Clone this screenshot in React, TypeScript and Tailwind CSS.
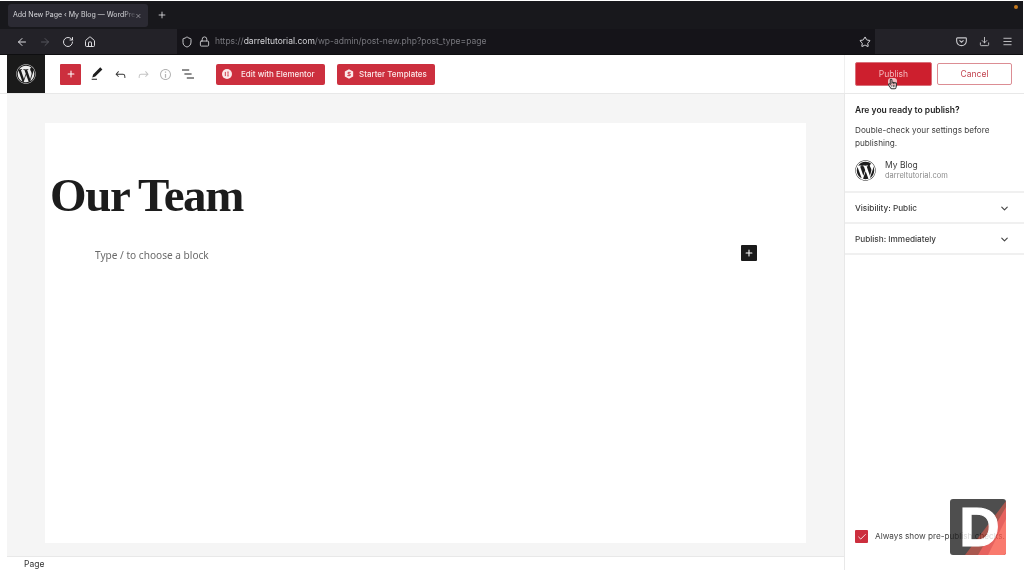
import { ArrowLeft, ArrowRight, RotateCw, House, Shield, Lock, Star, Download, Menu, X, Plus, ChevronDown, Check } from "lucide-react";
import { FaWordpress, FaRegHandPointer } from "react-icons/fa";

const ui = "font-['Inter','Liberation_Sans',sans-serif]";

function GbIcon({ d, className }: { d: string; className: string }) {
  return (
    <svg viewBox="0 0 24 24" className={className} fill="currentColor">
      <path d={d} />
    </svg>
  );
}

function BrowserChrome() {
  return (
    <div className={`${ui} shrink-0 pt-px pr-px bg-white`}>
      {/* tabs */}
      <div className="h-[28px] bg-[#18181c] flex items-center pl-[8px]">
        <div className="relative w-[140px] h-[23px] mt-px rounded-[3px] bg-[#2b2a33] flex items-center pl-[5px] pr-[6px] text-[7px] text-[#d8d8dc] whitespace-nowrap">
          <span>Add New Page ‹ My Blog — WordPre</span>
          <span className="absolute right-[12px] top-0 h-full w-[12px] bg-gradient-to-r from-transparent to-[#2b2a33]" />
          <X className="w-[8px] h-[8px] ml-auto text-[#c8c8cc]" />
        </div>
        <Plus className="w-[10px] h-[10px] ml-[9px] text-[#e2e2e6]" />
        <div className="ml-auto mr-[5px] mb-[17px] w-[4px] h-[4px] rounded-full bg-[#c67a1e]" />
      </div>
      {/* nav bar */}
      <div className="h-[26px] bg-[#232228] flex items-center pl-[16px] border-b border-[#0e0e10]">
        <ArrowLeft className="w-[12px] h-[12px] text-[#dcdce0]" />
        <ArrowRight className="w-[12px] h-[12px] ml-[11px] text-[#55555c]" />
        <RotateCw className="w-[12px] h-[12px] ml-[11px] text-[#dcdce0]" />
        <House className="w-[12px] h-[12px] ml-[10px] text-[#dcdce0]" />
        <div className="w-[698px] h-[25px] ml-[81px] bg-[#151419] flex items-center pl-[4px] text-[8.5px] text-[#77777d] whitespace-nowrap">
          <Shield className="w-[12px] h-[12px] text-[#c8c8cc]" />
          <Lock className="w-[11px] h-[11px] ml-[6px] text-[#c8c8cc]" />
          <span className="ml-[5px]">
            https://<span className="text-[#d4d4d8]">darreltutorial.com</span>/wp-admin/post-new.php?post_type=page
          </span>
          <Star className="w-[12px] h-[12px] ml-auto mr-[4px] text-[#e0e0e4]" />
        </div>
        <svg viewBox="0 0 12 12" className="w-[11px] h-[11px] ml-[81px] text-[#c8c8cc]" fill="none" stroke="currentColor" strokeWidth="1.2">
          <path d="M1.5 2h9a.8.8 0 0 1 .8.8V5.5a5.3 5 0 0 1-10.6 0V2.8a.8.8 0 0 1 .8-.8z" />
          <path d="M3.8 4.8L6 6.8l2.2-2" />
        </svg>
        <Download className="w-[11px] h-[11px] ml-[12px] text-[#c8c8cc]" />
        <Menu className="w-[11px] h-[11px] ml-[12px] text-[#c8c8cc]" />
      </div>
    </div>
  );
}

function Toolbar() {
  return (
    <div className="flex-1 flex items-center h-full">
      <div className="w-[38px] h-[38px] bg-[#1a1a1a] flex items-center justify-center shrink-0">
        <FaWordpress className="w-[20px] h-[20px] text-[#ececec]" />
      </div>
      <div className="w-[21px] h-[21px] ml-[15px] bg-[#cc2f3e] rounded-[1px] flex items-center justify-center">
        <Plus className="w-[10px] h-[10px] text-white" strokeWidth={2.5} />
      </div>
      <GbIcon className="w-[16px] h-[16px] ml-[8px] text-[#1e1e1e]" d="M20.1 5.1L16.9 2 6.2 12.7l-1.3 4.4 4.5-1.3L20.1 5.1zM4 20.8h8v-1.5H4v1.5z" />
      <GbIcon className="w-[15px] h-[15px] ml-[8px] text-[#333]" d="M18.3 11.7c-.6-.6-1.4-.9-2.3-.9H6.7l2.9-3.3-1.1-1-4.5 5L8.5 16l1-1-2.7-2.7H16c.5 0 .9.2 1.3.5 1 1 1 3.4 1 4.5v.3h1.5v-.2c0-1.5 0-4.3-1.5-5.7z" />
      <GbIcon className="w-[15px] h-[15px] ml-[8px] text-[#c4c4c4]" d="M15.6 6.5l-1.1 1 2.9 3.3H8c-.9 0-1.7.3-2.3.9-1.4 1.5-1.4 4.2-1.4 5.6v.2h1.5v-.3c0-1.1 0-3.5 1-4.5.3-.3.7-.5 1.3-.5h9.2L14.5 15l1.1 1.1 4.6-4.6-4.6-5z" />
      <GbIcon className="w-[15px] h-[15px] ml-[7px] text-[#b4b4b4]" d="M12 3.2c-4.8 0-8.8 3.9-8.8 8.8 0 4.8 3.9 8.8 8.8 8.8 4.8 0 8.8-3.9 8.8-8.8 0-4.8-4-8.8-8.8-8.8zm0 16c-4 0-7.2-3.3-7.2-7.2C4.8 8 8 4.8 12 4.8s7.2 3.3 7.2 7.2c0 4-3.2 7.2-7.2 7.2zM11 17h2v-6h-2v6zm0-8h2V7h-2v2z" />
      <GbIcon className="w-[16px] h-[16px] ml-[7px] text-[#1e1e1e]" d="M13.8 5.2H3v1.5h10.8V5.2zm-3.6 12v1.5H21v-1.5H10.2zm7.2-6H6.6v1.5h10.8v-1.5z" />
      <button className="w-[109px] h-[21px] ml-[20px] bg-[#cc2f3e] rounded-[2px] flex items-center pl-[6px] text-[8px] font-medium text-[#fbe9ea]">
        <svg viewBox="0 0 12 12" className="w-[10px] h-[10px]">
          <circle cx="6" cy="6" r="6" fill="#fbe9ea" />
          <path d="M4 3.5v5M6.2 3.8h2M6.2 6h2M6.2 8.2h2" fill="none" stroke="#cc2f3e" strokeWidth="1.1" />
        </svg>
        <span className="ml-[9px] whitespace-nowrap">Edit with Elementor</span>
      </button>
      <button className="w-[98px] h-[21px] ml-[12px] bg-[#cc2f3e] rounded-[2px] flex items-center pl-[7px] text-[8px] font-medium text-[#fbe9ea]">
        <svg viewBox="0 0 12 12" className="w-[10px] h-[10px]">
          <path d="M6 .3l5 2.8v5.8l-5 2.8-5-2.8V3.1z" fill="#fbe9ea" />
          <path d="M8 4H5v2h2.4v2H4" fill="none" stroke="#cc2f3e" strokeWidth="1.2" />
        </svg>
        <span className="ml-[5px] whitespace-nowrap">Starter Templates</span>
      </button>
    </div>
  );
}

function PublishActions() {
  return (
    <div className="w-[180px] h-full shrink-0 border-l border-[#efefef] flex items-center pl-[10px] text-[8.5px]">
      <div className="relative">
        <button className="w-[77px] h-[24px] rounded-[2px] bg-[#cd1f2e] border border-[#d9707a] text-[#f3b9be] flex items-center justify-center">
          Publish
        </button>
        <FaRegHandPointer className="absolute left-[33px] top-[16px] w-[9px] h-[12px] text-[#333] bg-white/70 rounded-[3px]" />
      </div>
      <button className="w-[75px] h-[22px] ml-[5px] rounded-[2px] border border-[#dc8d94] text-[#c2434f] flex items-center justify-center">
        Cancel
      </button>
    </div>
  );
}

function Sidebar() {
  return (
    <aside className={`${ui} w-[180px] shrink-0 bg-white border-l border-[#e8e8e8] flex flex-col text-[8.2px] text-[#3c3c3c]`}>
      <div className="h-[99px] border-b-2 border-[#f0f0f0] pl-[10px] pt-[10px] shrink-0">
        <div className="font-semibold text-[8.5px] text-[#1e1e1e] leading-[12px]">Are you ready to publish?</div>
        <div className="mt-[8px] leading-[12.5px] w-[150px]">Double-check your settings before publishing.</div>
        <div className="flex items-center mt-[10px]">
          <FaWordpress className="w-[21px] h-[21px] text-[#1e1e1e]" />
          <div className="ml-[9px]">
            <div className="text-[8.5px] leading-[12px]">My Blog</div>
            <div className="text-[7.5px] leading-[10px] text-[#8a8a8a]">darreltutorial.com</div>
          </div>
        </div>
      </div>
      {["Visibility: Public", "Publish: Immediately"].map((label) => (
        <div key={label} className="h-[31px] border-b-2 border-[#f0f0f0] flex items-center pl-[10px] pr-[14px] pt-px font-medium shrink-0">
          <span>{label}</span>
          <ChevronDown className="w-[11px] h-[11px] ml-auto text-[#444]" strokeWidth={2.5} />
        </div>
      ))}
      <div className="mt-auto mb-[27px] flex items-center pl-[10px] text-[8.2px] whitespace-nowrap">
        <span className="w-[13px] h-[13px] rounded-[1px] bg-[#cc2f3e] flex items-center justify-center">
          <Check className="w-[10px] h-[10px] text-white" strokeWidth={2} />
        </span>
        <span className="ml-[7px] text-[#444]">Always show pre-publish checks.</span>
      </div>
    </aside>
  );
}

function Watermark() {
  return (
    <div className="absolute left-[950px] top-[499px] w-[56px] h-[56px] rounded-[3px] opacity-80 bg-[#222]">
      <svg viewBox="0 0 56 56" className="absolute inset-0 w-full h-full rounded-[3px]">
        <path d="M56 2L15 56h41z" fill="#942e23" />
        <path d="M56 8L28 56h28z" fill="#e13b36" />
        <path d="M56 20L38 56h18z" fill="#f85a4b" />
      </svg>
      <span className="absolute inset-0 flex items-center justify-center pl-[3px] font-['Liberation_Sans',sans-serif] font-bold text-[56px] leading-none text-white [-webkit-text-stroke:1px_white]">D</span>
    </div>
  );
}

export default function App() {
  return (
    <div className="relative w-[1024px] h-[570px] overflow-hidden bg-white flex flex-col blur-[0.5px]">
      <BrowserChrome />
      <div className={`${ui} h-[39px] shrink-0 flex items-center pl-[7px] border-b border-[#e8e8e8] bg-white`}>
        <Toolbar />
        <PublishActions />
      </div>
      <div className="flex-1 flex min-h-0 pl-[7px]">
        <main className="flex-1 flex flex-col min-w-0">
          <div className="flex-1 bg-[#f5f5f5] pt-[29px] pl-[38px] pr-[38px] pb-[13px] min-h-0">
            <div className="h-full bg-white pl-[5px] pt-[48px] relative">
              <h1 className="font-['Liberation_Serif',serif] font-bold text-[47px] leading-[48px] tracking-[-1.4px] text-[#1c1c1c]">Our Team</h1>
              <div className="flex items-start justify-between mt-[26px] pl-[45px] pr-[49px]">
                <span className="mt-[3px] font-['Noto_Sans',sans-serif] text-[10.1px] leading-[14px] text-[#6a6a6a]">Type / to choose a block</span>
                <span className="w-[16px] h-[16px] bg-[#1a1a1a] rounded-[1px] flex items-center justify-center">
                  <Plus className="w-[10px] h-[10px] text-white" strokeWidth={2.5} />
                </span>
              </div>
            </div>
          </div>
          <div className={`${ui} h-[14px] shrink-0 border-t border-[#e8e8e8] pl-[17px] text-[8.5px] leading-[15px] text-[#333]`}>Page</div>
        </main>
        <Sidebar />
      </div>
      <Watermark />
    </div>
  );
}
